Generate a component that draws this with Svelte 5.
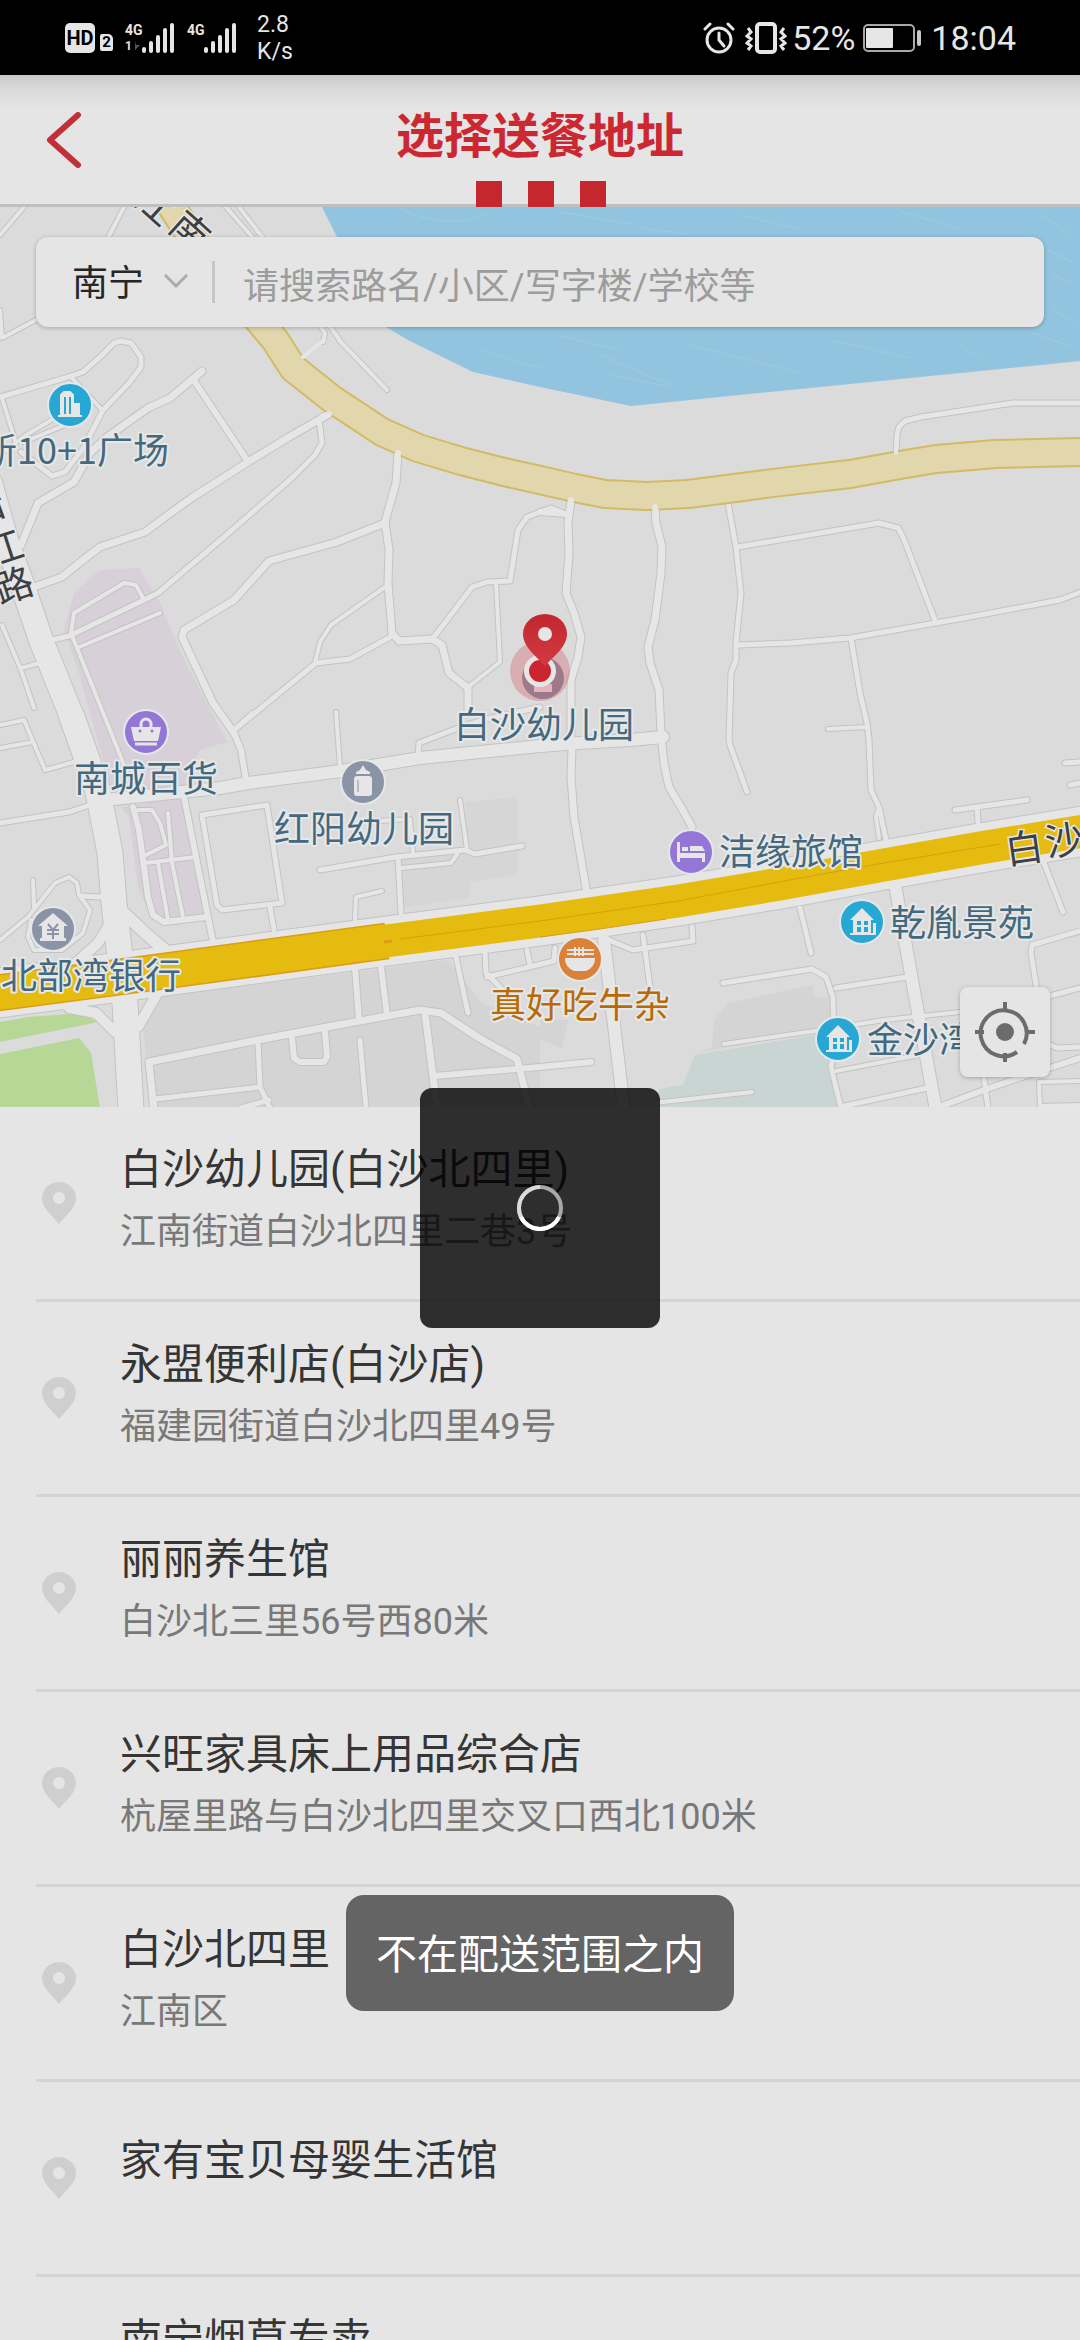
<script lang="ts">
  type Tile = { x: number; y: number };
  type Road = { w: number; t: Tile; p: string };

  const N: Tile = { x: 0, y: 0 };
  const A: Tile = { x: 0, y: 340 };
  const B: Tile = { x: 540, y: 340 };
  const C: Tile = { x: 0, y: 720 };
  const D: Tile = { x: 540, y: 720 };

  function place(t: Tile, p: string): string {
    return p
      .split(' ')
      .map((pair) => {
        const [x, y] = pair.split(',').map(Number);
        return `${Math.round(t.x + x / 2.904)},${Math.round(t.y + y / 3)}`;
      })
      .join(' ');
  }

  const raw: Road[] = [
    { w: 4, t: N, p: '70,620 0,705' },
    { w: 4, t: N, p: '360,620 315,715' },
    { w: 4, t: N, p: '655,620 735,715' },
    { w: 4, t: N, p: '695,620 765,715' },
    { w: 4, t: N, p: '0,930 5,1015 105,960' },
    { w: 4, t: N, p: '925,975 945,1000 938,1025' },
    { w: 4, t: N, p: '955,975 990,1025' },
    { w: 7, t: A, p: '588,92 550,125 495,175 430,205 310,290 260,340 215,425 110,490 60,615' },
    { w: 6, t: A, p: '560,118 718,360' },
    { w: 7, t: A, p: '955,222 840,290 720,365 560,470 500,515 420,575 290,620 240,660 180,710 100,740' },
    { w: 5, t: A, p: '925,240 935,310 915,345 850,410 650,590 460,760 430,775 200,888 150,900' },
    { w: 5, t: A, p: '0,170 190,115 240,95 290,50 330,8 350,4 380,10 410,50 410,80 375,130 300,210 245,320 190,395 150,408 60,335' },
    { w: 4, t: A, p: '210,115 300,212' },
    { w: 4, t: A, p: '0,345 75,285 190,215' },
    { w: 4, t: A, p: '70,305 190,255' },
    { w: 4, t: A, p: '5,175 45,300' },
    { w: 4, t: A, p: '985,0 1125,150' },
    { w: 7, t: A, p: '1155,340 1150,430 1118,545 1130,630 1128,730 1138,880 1160,902 1255,898 1285,915 1305,1000 1358,1045 1360,1110' },
    { w: 7, t: A, p: '1118,548 980,605 780,662 680,780 535,870 528,890 620,1090 680,1180' },
    { w: 4, t: A, p: '1128,735 960,855 930,905 915,970' },
    { w: 5, t: A, p: '1138,888 1015,958 918,970 680,1170' },
    { w: 5, t: A, p: '1260,890 1370,740 1415,725 1480,722 1505,570 1530,530 1600,505 1645,522' },
    { w: 4, t: A, p: '1440,730 1452,965 1358,1040' },
    { w: 4, t: A, p: '975,1115 988,1280' },
    { w: 4, t: A, p: '415,775 395,735 360,728 215,820 205,880 330,1200 365,1290' },
    { w: 4, t: A, p: '225,925 465,818' },
    { w: 4, t: A, p: '5,855 60,990 100,1105' },
    { w: 4, t: A, p: '60,985 115,968' },
    { w: 4, t: A, p: '0,1155 70,1140 130,1290 215,1265' },
    { w: 4, t: C, p: '0,85 95,65' },
    { w: 12, t: C, p: '330,237 640,205 720,190 990,152 1220,115 1568,78 1680,68 1830,60 1925,50' },
    { w: 6, t: C, p: '680,40 700,90 715,180' },
    { w: 5, t: C, p: '680,30 735,-20' },
    { w: 5, t: C, p: '1215,110 1218,70 1330,25 1400,0 1568,-40' },
    { w: 5, t: C, p: '0,308 200,277 260,255' },
    { w: 6, t: C, p: '385,260 405,330 430,530 445,585 475,605 600,590' },
    { w: 4, t: C, p: '400,270 440,270 465,310 482,375 425,405' },
    { w: 6, t: C, p: '535,230 620,665' },
    { w: 4, t: C, p: '420,430 570,410' },
    { w: 4, t: C, p: '460,430 488,600' },
    { w: 4, t: C, p: '488,280 500,430 532,590' },
    { w: 5, t: C, p: '588,285 775,255 818,550 645,570 630,555 588,285' },
    { w: 5, t: C, p: '785,560 795,630' },
    { w: 5, t: C, p: '930,450 1150,410 1350,390 1380,402 1515,378' },
    { w: 4, t: C, p: '1335,240 1355,390' },
    { w: 5, t: C, p: '1155,410 1165,580' },
    { w: 4, t: C, p: '1165,445 1310,430 1330,400' },
    { w: 4, t: C, p: '1100,303 1190,296 1200,400' },
    { w: 4, t: C, p: '1110,513 1035,530 1032,600' },
    { w: 4, t: C, p: '0,660 80,590 160,490 200,470 225,490 230,525 260,570 240,640 180,690 100,690 80,650 90,600' },
    { w: 4, t: C, p: '95,480 100,560' },
    { w: 5, t: C, p: '235,528 290,530' },
    { w: 12, t: C, p: '360,580 420,640 480,690' },
    { w: 10, t: C, p: '320,610 285,670 220,730' },
    { w: 10, t: C, p: '460,815 400,920' },
    { w: 10, t: C, p: '200,865 280,880 335,935' },
    { w: 7, t: C, p: '448,1170 432,1025 750,960 950,920 1220,870 1280,880 1390,955 1500,1018 1540,1170' },
    { w: 5, t: C, p: '750,965 755,1100 785,1165' },
    { w: 5, t: C, p: '450,1138 755,1100' },
    { w: 5, t: C, p: '700,1165 780,1140' },
    { w: 6, t: C, p: '848,955 855,1015 870,1027 940,1025 950,1010 945,935' },
    { w: 5, t: C, p: '1045,960 1062,1165' },
    { w: 7, t: C, p: '1235,880 1270,1165' },
    { w: 6, t: C, p: '1260,1067 1568,1040 1715,1027' },
    { w: 6, t: C, p: '1030,745 1042,900' },
    { w: 6, t: C, p: '1105,740 1125,885' },
    { w: 5, t: C, p: '1325,710 1360,880' },
    { w: 5, t: C, p: '1408,690 1410,760 1470,820' },
    { w: 5, t: C, p: '1415,770 1610,722 1613,685' },
    { w: 5, t: C, p: '1530,690 1538,735' },
    { w: 7, t: B, p: '335,500 338,550 355,620 350,700 335,840 315,920 320,970 345,1050 352,1180 360,1270 375,1340 410,1400 440,1460' },
    { w: 7, t: B, p: '90,480 80,550 85,640 75,760 100,820 120,890 110,950 90,1020 90,1200' },
    { w: 6, t: B, p: '0,515 75,522' },
    { w: 5, t: B, p: '1035,345 1037,285 1043,260 1060,243 1105,232 1240,210 1375,190 1580,190' },
    { w: 5, t: B, p: '545,490 570,620 585,760 570,910 568,960 555,1000 550,1200 553,1215 600,1355' },
    { w: 5, t: B, p: '575,620 985,550 1040,565 1055,590 1150,850' },
    { w: 5, t: B, p: '575,915 730,910 900,893 1230,835 1510,780 1570,755' },
    { w: 5, t: B, p: '903,895 930,1060 950,1150 955,1200 960,1350 985,1400 1005,1500' },
    { w: 4, t: B, p: '835,1168 950,1160' },
    { w: 4, t: D, p: '985,260 975,290 985,355' },
    { w: 7, t: D, p: '92,85 90,170 100,290 135,505' },
    { w: 5, t: D, p: '1205,270 1415,240' },
    { w: 5, t: D, p: '1270,265 1272,305' },
    { w: 5, t: D, p: '1525,130 1568,126' },
    { w: 5, t: D, p: '1540,195 1568,190' },
    { w: 12, t: D, p: '185,660 245,1170' },
    { w: 12, t: D, p: '1035,510 1080,780 1150,1170' },
    { w: 5, t: D, p: '200,660 270,690 443,663 440,620' },
    { w: 5, t: D, p: '300,645 320,800' },
    { w: 5, t: D, p: '755,565 788,700' },
    { w: 5, t: D, p: '530,790 790,748 830,770 850,830 855,1000 845,1040 875,1165' },
    { w: 5, t: D, p: '860,805 1065,772' },
    { w: 4, t: D, p: '535,972 800,932 1000,900 1220,875' },
    { w: 4, t: D, p: '860,1053 1100,1005' },
    { w: 5, t: D, p: '870,1160 1125,1105' },
    { w: 5, t: D, p: '1568,632 1430,675 1425,700 1445,830' },
    { w: 5, t: D, p: '1480,827 1568,805' },
    { w: 5, t: D, p: '1470,970 1500,985 1568,980' },
    { w: 6, t: D, p: '1568,1015 1400,1070 1290,1110 1160,1160' },
    { w: 5, t: D, p: '1290,1075 1300,1165' },
    { w: 4, t: D, p: '1568,1155 1452,1158 1450,1085 1568,1083' },
    { w: 5, t: D, p: '1465,430 1520,575' },
    { w: 4, t: D, p: '330,1150 615,1115' },
    { w: 24, t: A, p: '-30,430 20,610 68,740 120,900 210,1130' },
    { w: 25, t: C, p: '210,-10 282,200 318,400 332,550 362,850 380,1170' }
  ];
  const roads = raw.map((r) => ({ w: r.w, d: place(r.t, r.p) }));

  const ring = '172,207 200,250 245,304 275,340 293,368 332,399 382,432 418,448 461,461 500,471 540,480 575,488 605,494 647,496 688,494 735,488 781,482 850,474 900,465 936,459 995,454 1080,452';
  const access = [
    { w: 4, d: place(A, '880,50 940,0') },
    { w: 6, d: place(A, '935,232 955,222') },
    { w: 6, d: place(A, '1155,340 1152,360') },
    { w: 6, d: place(B, '90,480 86,500') },
    { w: 6, d: place(B, '335,500 336,520') },
    { w: 4, d: place(B, '1035,340 1035,325') }
  ];
  const trunk = '-10,994 150,973 387,941 540,921 678,901 780,884 884,865 980,848 1090,830';

  const pois = [
    { kind: 'tower', x: 70, y: 405, color: '#27a7d3' },
    { kind: 'bag', x: 146, y: 732, color: '#9476d6' },
    { kind: 'bottle', x: 363, y: 782, color: '#8b93a6' },
    { kind: 'bank', x: 53, y: 929, color: '#8b93a6' },
    { kind: 'bed', x: 691, y: 852, color: '#9476d6' },
    { kind: 'house', x: 862, y: 922, color: '#27a7d3' },
    { kind: 'house', x: 838, y: 1039, color: '#27a7d3' },
    { kind: 'bowl', x: 580, y: 959, color: '#dc8138' }
  ];

  const labels = [
    { text: '新10+1广场', x: 169, y: 464, anchor: 'end' },
    { text: '南城百货', x: 146, y: 792, anchor: 'middle' },
    { text: '红阳幼儿园', x: 364, y: 842, anchor: 'middle' },
    { text: '北部湾银行', x: 91, y: 989, anchor: 'middle' },
    { text: '白沙幼儿园', x: 544, y: 738, anchor: 'middle' },
    { text: '洁缘旅馆', x: 719, y: 865, anchor: 'start' },
    { text: '乾胤景苑', x: 890, y: 936, anchor: 'start' },
    { text: '金沙湾', x: 867, y: 1053, anchor: 'start' },
    { text: '真好吃牛杂', x: 580, y: 1018, anchor: 'middle', food: true }
  ];

  const places = [
    { name: '白沙幼儿园(白沙北四里)', address: '江南街道白沙北四里二巷3号' },
    { name: '永盟便利店(白沙店)', address: '福建园街道白沙北四里49号' },
    { name: '丽丽养生馆', address: '白沙北三里56号西80米' },
    { name: '兴旺家具床上用品综合店', address: '杭屋里路与白沙北四里交叉口西北100米' },
    { name: '白沙北四里', address: '江南区' },
    { name: '家有宝贝母婴生活馆', address: '' },
    { name: '南宁烟草专卖', address: '江南区' }
  ];

  const bars = [6, 12, 18, 25, 30];
</script>

{#snippet signal()}
  <svg class="signal" viewBox="0 0 33 30" aria-hidden="true">
    {#each bars as h, i}
      <rect x={i * 7} y={30 - h} width="4" height={h} rx="2" fill="#e6e6e6" />
    {/each}
  </svg>
{/snippet}

<div class="screen">
  <div class="status">
    <div class="group">
      <span class="hd">HD</span>
      <span class="sim">2</span>
      <span class="net">
        <span class="gen">
          <span>4G</span>
          <span class="slot">
            1
            <svg viewBox="0 0 6 10" aria-hidden="true"><path d="M1 0v9l5-5H2" fill="#555" /></svg>
          </span>
        </span>
        {@render signal()}
      </span>
      <span class="net second">
        <span class="gen">4G</span>
        {@render signal()}
      </span>
      <span class="speed">2.8<br />K/s</span>
    </div>
    <div class="group right">
      <svg class="alarm" viewBox="0 0 32 32" fill="none" stroke="#e6e6e6" aria-hidden="true">
        <circle cx="16" cy="18" r="12" stroke-width="3" />
        <path d="M16 11v7l5 6" stroke-width="3" stroke-linecap="round" stroke-linejoin="round" />
        <path d="M2 7l5-5M30 7l-5-5" stroke-width="3" stroke-linecap="round" />
      </svg>
      <svg class="vibrate" viewBox="0 0 42 32" fill="none" stroke="#e6e6e6" stroke-width="4" aria-hidden="true">
        <rect x="12" y="2" width="18" height="28" rx="3" />
        <path d="M3 6l3 4-4 4 4 3-4 4 4 3-3 4M39 6l-3 4 4 4-4 3 4 4-4 3 3 4" stroke-width="3" />
      </svg>
      <span class="percent">52%</span>
      <svg class="battery" viewBox="0 0 58 28" aria-hidden="true">
        <rect x="1" y="1" width="50" height="26" rx="4" fill="none" stroke="#a9a9a9" stroke-width="2" />
        <rect x="3" y="4" width="27" height="20" rx="1" fill="#e6e6e6" />
        <rect x="54" y="6" width="4" height="16" rx="2" fill="#c8c8c8" />
      </svg>
      <span class="clock">18:04</span>
    </div>
  </div>

  <header class="bar">
    <button class="back" aria-label="返回">
      <svg viewBox="0 0 36 56" aria-hidden="true">
        <path d="M32 3L4 28l28 25" fill="none" stroke="#bf3039" stroke-width="6" stroke-linecap="round" stroke-linejoin="round" />
      </svg>
    </button>
    <h1>选择送餐地址</h1>
    <div class="marks" aria-hidden="true"><i></i><i></i><i></i></div>
  </header>

  <section class="map" aria-label="地图">
    <svg class="canvas" viewBox="0 207 1080 900">
      <defs>
        <linearGradient id="pin" x1="0" y1="0" x2="0" y2="1">
          <stop offset="0" stop-color="#c2272f" />
          <stop offset="1" stop-color="#d23a42" />
        </linearGradient>
      </defs>
      <rect x="0" y="207" width="1080" height="900" fill="#dbdbdb" />
      <path d="M322 207L337 237 355 285 386 327 408 340 473 372 540 387 631 406 790 390 1080 361V207z" fill="#93c4df" />
      <g stroke="#a3cde3" stroke-width="1" fill="none" opacity=".7">
        <path d="M400 209q50 22 90 4M560 212l70 12M740 215l60 14M900 211l60 18M1040 214l30 20M640 228l50 6M1048 250l24 12M1052 275l20 8M1052 310l25 14M560 336l60 14M690 345l110 28M600 355l70 30M830 340l80 18M960 345l20 14M1030 332l40 14M480 350l60 18M610 375l60 12" />
      </g>
      <g fill="#d8d0d8">
        <polygon points={place(A, '290,690 405,683 465,790 530,950 660,1205 580,1230 550,1290 520,1400 330,1380 230,1000 185,870 215,760')} />
        <polygon points={place(C, '350,262 540,235 605,600 470,612 440,600 400,500 375,290')} />
      </g>
      <g fill="#d4d4d4">
        <polygon points={place(C, '1350,245 1505,232 1505,465 1365,485 1365,535 1165,565 1160,405 1360,385')} fill="#d6d6d6" />
        <polygon points={place(C, '460,830 1300,720 1400,850 1568,920 1568,1170 440,1170 415,920')} />
        <polygon points={place(D, '0,900 80,900 65,985 0,960')} />
        <polygon points={place(D, '545,850 790,795 800,835 850,830 855,925 460,1000 500,980 505,900')} />
      </g>
      <polygon points={place(D, '450,1005 850,935 870,1165 345,1165 345,1108 415,1095')} fill="#c9d5d2" />
      <g fill="#b7d797">
        <polygon points={place(C, '0,905 80,892 200,882 250,888 285,905 0,965')} />
        <polygon points={place(C, '0,1003 230,955 265,1000 290,1165 0,1165')} />
      </g>

      <g fill="none" stroke-linecap="round" stroke-linejoin="round">
        {#each roads as r}
          <polyline points={r.d} stroke="#c3c3c3" stroke-width={r.w + 2} />
        {/each}
        <polyline points={trunk} stroke="#c3c3c3" stroke-width="51" />
        {#each roads as r}
          <polyline points={r.d} stroke="#e6e6e6" stroke-width={r.w} />
        {/each}
        <polyline points={trunk} stroke="#e6e6e6" stroke-width="49" />
        <polyline points={ring} stroke="#d2bb63" stroke-width="30" />
        <polyline points={ring} stroke="#e1d6ac" stroke-width="26" />
        {#each access as r}
          <polyline points={r.d} stroke="#e6e6e6" stroke-width={r.w} />
        {/each}
      </g>
      <g fill="none" stroke-linejoin="round">
        <polyline points="-10,994 150,973 387,941" stroke="#dd9d12" stroke-width="37" />
        <polyline points="-10,994 150,973 387,941" stroke="#e5bb10" stroke-width="34" />
        <polyline points="386,941 540,921 678,901 780,884 884,865 980,848 1090,830" stroke="#e5bb10" stroke-width="33" />
        <polyline points="384,942 392,941" stroke="#dd9d12" stroke-width="3" />
        <polyline points="400,939 540,921 678,901 800,878 884,863 1000,844" stroke="#d6a10c" stroke-width="1" />
        <polyline points="540,937 600,929 666,919" stroke="#dd9d12" stroke-width="1" />
      </g>

      {#each pois as poi}
        <g transform="translate({poi.x} {poi.y})">
          <circle r="22" fill={poi.color} stroke="#e3e8ea" stroke-width="2" />
          {#if poi.kind === 'tower'}
            <path d="M-9 10V-10l3-3h6l3 3v20zM3-1h6v11H3zM-12 11h24" fill="#e6e6e6" stroke="#e6e6e6" stroke-width="2" />
            <path d="M-5-8V9M0-8V9" stroke={poi.color} stroke-width="2" />
          {:else if poi.kind === 'bag'}
            <path d="M-15-5h30l-3 14h-24z" fill="#e6e6e6" />
            <path d="M-11 12h22" stroke="#e6e6e6" stroke-width="3" />
            <path d="M-5-5v-3a5 5 0 0 1 10 0v3" fill="none" stroke="#e6e6e6" stroke-width="3" />
            <circle cx="-6" cy="-1" r="1.5" fill={poi.color} /><circle cx="6" cy="-1" r="1.5" fill={poi.color} />
          {:else if poi.kind === 'bottle'}
            <path d="M0-17l3 5 4 2v2H-7v-2l4-2z" fill="#e6e6e6" />
            <rect x="-9" y="-6" width="18" height="20" rx="3" fill="#e6e6e6" />
            <path d="M-5-2v12" stroke={poi.color} stroke-width="1" />
          {:else if poi.kind === 'bank'}
            <path d="M0-16L15-3h-4v12h2v3h-26V9h2V-3h-4z" fill="#e6e6e6" />
            <path d="M-5-5l5 6 5-6M0 1v9M-6 1H6M-6 5H6" fill="none" stroke={poi.color} stroke-width="2" />
          {:else if poi.kind === 'bed'}
            <path d="M-14-10h3V1h25v9h-3V6h-22v4h-3z" fill="#e6e6e6" />
            <path d="M-9-5h6v4h-6zM-1-6h12l3 5H-1z" fill="#e6e6e6" />
          {:else if poi.kind === 'house'}
            <path d="M0-14L12-2H9v13H-9V-2h-3z" fill="#e6e6e6" />
            <path d="M-5-1h4v4h-4zM2-1h4v4H2zM-5 5h4v5h-4zM2 5h4v5H2z" fill={poi.color} />
            <path d="M11 1h3v10h-3zM-12 11h26v2h-26z" fill="#e6e6e6" />
          {:else}
            <path d="M-15-1h30a15 13 0 0 1-9 13H-6a15 13 0 0 1-9-13z" fill="#e6e6e6" />
            <path d="M-13-9h27M-13-5h27M-5-12v9M-1-12v9M3-12v9" stroke="#e6e6e6" stroke-width="2" />
          {/if}
        </g>
      {/each}

      <g class="road-name">
        <text transform="translate(156 205) rotate(42)" text-anchor="middle" y="14">江</text>
        <text transform="translate(190 231) rotate(42)" text-anchor="middle" y="14">南</text>
        <text transform="translate(-14 508) rotate(-20)" text-anchor="middle" y="13">沿</text>
        <text transform="translate(4 549) rotate(-18)" text-anchor="middle" y="13">江</text>
        <text transform="translate(14 586) rotate(-18)" text-anchor="middle" y="13">路</text>
        <text transform="translate(1024 848) rotate(-8)" text-anchor="middle" y="14">白</text>
        <text transform="translate(1064 840) rotate(-8)" text-anchor="middle" y="14">沙</text>
      </g>
      <g class="poi-name">
        {#each labels as l}
          <text class:food={l.food} x={l.x} y={l.y} text-anchor={l.anchor}>{l.text}</text>
        {/each}
      </g>

      <circle cx="543" cy="678" r="21" fill="#8b93a6" />
      <rect x="534" y="684" width="18" height="8" rx="1" fill="#e6e6e6" />
      <circle cx="540" cy="671" r="30" fill="#d0303c" opacity=".26" />
      <circle cx="540" cy="671" r="16" fill="#e6e6e6" />
      <circle cx="540" cy="671" r="11" fill="#cb2630" />
      <path d="M545 667c-3-7-22-18-22-33a22 20 0 0 1 44 0c0 15-19 26-22 33z" fill="url(#pin)" />
      <circle cx="545" cy="634" r="7" fill="#e6e6e6" />
    </svg>

    <form class="search">
      <button type="button" class="city">
        南宁
        <svg viewBox="0 0 24 14" aria-hidden="true"><path d="M1 1l11 11L23 1" fill="none" stroke="#acacac" stroke-width="3" /></svg>
      </button>
      <input type="text" aria-label="搜索地址" placeholder="请搜索路名/小区/写字楼/学校等" />
    </form>

    <button class="locate" aria-label="定位">
      <svg viewBox="0 0 60 60" fill="none" stroke="#6c6c6c" stroke-width="4" aria-hidden="true">
        <path d="M49 42A23 23 0 1 0 42 50" />
        <path d="M30 0v9M30 51v9M0 30h9M51 30h9" />
        <circle cx="30" cy="30" r="9" fill="#6c6c6c" stroke="none" />
      </svg>
    </button>
  </section>

  <ul class="places">
    {#each places as place}
      <li class:single={!place.address}>
        <svg class="marker" viewBox="0 0 34 42" aria-hidden="true">
          <path fill-rule="evenodd" d="M17 0a17 16 0 0 1 17 16c0 10-10 17-17 26C10 33 0 26 0 16A17 16 0 0 1 17 0zm0 10a6 6 0 1 0 0 12 6 6 0 0 0 0-12z" fill="#cfcfcf" />
        </svg>
        <div class="text">
          <h2>{place.name}</h2>
          {#if place.address}<p>{place.address}</p>{/if}
        </div>
      </li>
    {/each}
  </ul>

  <div class="loading" role="status" aria-label="加载中">
    <svg viewBox="0 0 46 46" fill="none" stroke-width="4" aria-hidden="true">
      <circle cx="23" cy="23" r="21" stroke="#a8a8a8" />
      <path d="M23 2A21 21 0 0 0 23 44" stroke="#dadada" />
      <path d="M4 32A21 21 0 0 0 42 32" stroke="#fff" />
    </svg>
  </div>

  <div class="toast" role="alert">不在配送范围之内</div>
</div>

<style>
  :global(body) {
    margin: 0;
    background: #e5e5e5;
  }
  .screen {
    position: relative;
    display: flex;
    flex-direction: column;
    height: 100vh;
    overflow: hidden;
    background: #e5e5e5;
    font-family: Roboto, 'Noto Sans CJK SC', sans-serif;
  }
  button {
    border: 0;
    padding: 0;
    background: none;
    font: inherit;
    color: inherit;
  }
  svg {
    display: block;
  }

  .status {
    flex: none;
    display: flex;
    justify-content: space-between;
    height: 75px;
    padding: 0 64px 0 65px;
    background: #000;
    color: #e6e6e6;
  }
  .group {
    display: flex;
    align-items: center;
  }
  .hd {
    width: 30px;
    border-radius: 5px;
    background: #e6e6e6;
    color: #000;
    font-size: 20px;
    font-weight: 700;
    line-height: 30px;
    text-align: center;
  }
  .sim {
    align-self: flex-end;
    width: 13px;
    margin: 0 12px 24px 5px;
    border-radius: 2px 5px 2px 2px;
    background: #e6e6e6;
    color: #000;
    font-size: 15px;
    font-weight: 700;
    line-height: 17px;
    text-align: center;
  }
  .net {
    display: flex;
    height: 31px;
    align-items: flex-end;
  }
  .second {
    margin-left: 12px;
  }
  .gen {
    align-self: flex-start;
    display: flex;
    flex-direction: column;
    width: 17px;
    font-size: 14px;
    font-weight: 700;
    line-height: 17px;
    white-space: nowrap;
  }
  .slot {
    display: flex;
    align-items: center;
    gap: 2px;
    font-size: 12px;
    line-height: 14px;
  }
  .slot svg {
    width: 6px;
    height: 10px;
  }
  .signal {
    width: 33px;
    height: 30px;
  }
  .speed {
    margin-left: 20px;
    font-size: 23px;
    line-height: 27px;
  }
  .alarm {
    width: 32px;
    height: 32px;
    margin-right: 10px;
  }
  .vibrate {
    width: 42px;
    height: 32px;
    margin-right: 5px;
  }
  .percent,
  .clock {
    font-size: 34px;
    line-height: 40px;
  }
  .battery {
    width: 58px;
    height: 28px;
    margin: 0 10px 0 8px;
  }

  .bar {
    flex: none;
    position: relative;
    display: flex;
    align-items: center;
    justify-content: center;
    height: 129px;
    border-bottom: 3px solid #bcc0c2;
    background: linear-gradient(#c9c9c9, #dcdcdc 16px, #e5e5e5 34px);
  }
  .back {
    position: absolute;
    left: 28px;
    padding: 12px 18px;
  }
  .back svg {
    width: 36px;
    height: 56px;
  }
  h1 {
    margin: 0 0 6px;
    color: #cc2832;
    font-size: 48px;
    line-height: 64px;
    font-weight: 700;
  }
  .marks {
    position: absolute;
    bottom: -3px;
    left: 50%;
    display: flex;
    gap: 26px;
    margin-left: -64px;
  }
  .marks i {
    width: 26px;
    height: 26px;
    background: #c4272e;
  }

  .map {
    flex: none;
    position: relative;
  }
  .canvas {
    width: 100%;
    height: auto;
  }
  .road-name text {
    fill: #3c4043;
    stroke: #e6e6e6;
    stroke-width: 3px;
    paint-order: stroke;
    font-size: 38px;
  }
  .poi-name text {
    fill: #44687e;
    stroke: #e6e8e8;
    stroke-width: 4px;
    stroke-linejoin: round;
    paint-order: stroke;
    font-family: 'Noto Sans CJK SC', sans-serif;
    font-size: 36px;
  }
  .poi-name .food {
    fill: #b96a08;
  }
  .search {
    position: absolute;
    top: 30px;
    left: 36px;
    right: 36px;
    display: flex;
    align-items: center;
    height: 90px;
    border-radius: 12px;
    background: #e5e5e5;
    box-shadow: 0 1px 4px rgba(0, 0, 0, 0.25);
  }
  .city {
    display: flex;
    align-items: center;
    gap: 20px;
    height: 42px;
    padding: 4px 24px 0 36px;
    border-right: 3px solid #c6c6c6;
    color: #262626;
    font-size: 36px;
    line-height: 42px;
  }
  .city svg {
    width: 24px;
    height: 14px;
    margin-bottom: 6px;
  }
  input {
    flex: 1;
    min-width: 0;
    padding: 10px 24px 0 28px;
    border: 0;
    outline: 0;
    background: none;
    color: #262626;
    font: inherit;
    font-size: 36px;
    line-height: 48px;
  }
  input::placeholder {
    color: #9c9c9c;
    opacity: 1;
  }
  .locate {
    position: absolute;
    right: 30px;
    bottom: 30px;
    display: grid;
    place-items: center;
    width: 90px;
    height: 90px;
    border-radius: 8px;
    background: #e5e5e5;
    box-shadow: 0 1px 4px rgba(0, 0, 0, 0.25);
  }
  .locate svg {
    width: 60px;
    height: 60px;
  }

  .places {
    flex: 1;
    min-height: 0;
    margin: 0;
    padding: 0 0 0 36px;
    overflow: hidden;
    list-style: none;
  }
  li {
    box-sizing: border-box;
    display: flex;
    align-items: center;
    gap: 44px;
    height: 195px;
    padding-left: 6px;
    border-bottom: 3px solid #d4d4d4;
  }
  .marker {
    flex: none;
    width: 34px;
    height: 42px;
  }
  .text {
    flex: 1;
    padding-bottom: 6px;
  }
  .single .text {
    padding-bottom: 34px;
  }
  h2 {
    margin: 0;
    color: #353535;
    font-size: 42px;
    font-weight: 400;
    line-height: 64px;
  }
  p {
    margin: 0;
    color: #787878;
    font-size: 36px;
    line-height: 60px;
  }

  .loading {
    position: absolute;
    top: calc(50% + 38px);
    left: 50%;
    display: grid;
    place-items: center;
    width: 240px;
    height: 240px;
    border-radius: 12px;
    background: rgba(0, 0, 0, 0.8);
    transform: translate(-50%, -50%);
  }
  .loading svg {
    width: 46px;
    height: 46px;
  }
  .toast {
    position: absolute;
    bottom: 329px;
    left: 50%;
    padding: 30px 30px 26px;
    border-radius: 18px;
    background: #646464;
    color: #fff;
    font-size: 41px;
    line-height: 60px;
    white-space: nowrap;
    transform: translateX(-50%);
  }
</style>
